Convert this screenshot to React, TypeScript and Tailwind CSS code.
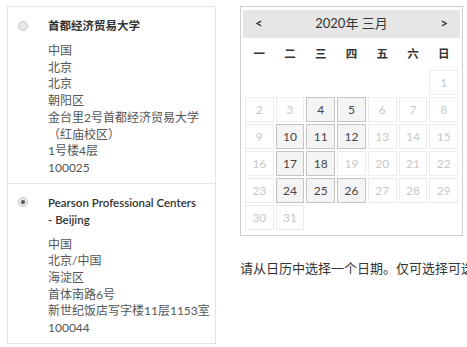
import React from "react";

const FONT = { fontFamily: '"Lato", "Noto Sans CJK SC", sans-serif' };

function Radio({ checked }: { checked?: boolean }) {
  return (
    <div className="w-[10px] h-[10px] shrink-0 rounded-full border border-[#c8c8c8] bg-[#e8e8e8] flex items-center justify-center mt-[3.5px]">
      {checked && <div className="w-[4px] h-[4px] rounded-full bg-[#555]" />}
    </div>
  );
}

function Item({ title, lines, checked, last }: { title: string[]; lines: string[]; checked?: boolean; last?: boolean }) {
  return (
    <div className={"flex gap-[20px] pl-[10px] pt-[10px] " + (last ? "pb-[6px]" : "pb-[6px] border-b border-[#e6e6e6]")}>
      <Radio checked={checked} />
      <div className="w-[166px] shrink-0">
        <div className="text-[11.5px] leading-[17px] font-semibold text-[#333]">
          {title.map((t, i) => (
            <div key={i}>{t}</div>
          ))}
        </div>
        <div className="mt-[9px] text-[12px] leading-[16.7px] text-[#555] whitespace-nowrap">
          {lines.map((t, i) => (
            <div key={i}>{t}</div>
          ))}
        </div>
      </div>
    </div>
  );
}

const enabled = new Set([4, 5, 10, 11, 12, 17, 18, 24, 25, 26]);

export default function App() {
  const cells: (number | null)[] = [null, null, null, null, null, null];
  for (let d = 1; d <= 31; d++) cells.push(d);
  return (
    <div className="w-[467px] h-[347px] overflow-hidden bg-white relative" style={FONT}>
      <div className="flex items-start pt-[6px] pl-[7px]">
        <div className="w-[209px] shrink-0 border border-[#e3e3e3]">
          <Item
            title={["首都经济贸易大学"]}
            lines={["中国", "北京", "北京", "朝阳区", "金台里2号首都经济贸易大学", "（红庙校区）", "1号楼4层", "100025"]}
          />
          <Item
            checked
            last
            title={["Pearson Professional Centers", "- Beijing"]}
            lines={["中国", "北京/中国", "海淀区", "首体南路6号", "新世纪饭店写字楼11层1153室", "100044"]}
          />
        </div>
        <div className="ml-[24px] w-[223px] shrink-0 flex flex-col">
          <div className="w-[223px] border border-[#cfcfcf] p-[2px] pb-[5px]">
            <div className="h-[28px] bg-[#e6e6e6] flex items-center justify-between px-[12px] text-[#333] mt-[1px]">
              <span className="font-bold text-[13px]">&lt;</span>
              <span className="text-[13px]">2020年 三月</span>
              <span className="font-bold text-[13px]">&gt;</span>
            </div>
            <div className="mx-[2px] grid grid-cols-7 gap-x-[2px] h-[32px] items-center text-[11.5px] font-bold text-[#333]">
              {["一", "二", "三", "四", "五", "六", "日"].map((w) => (
                <div key={w} className="text-center">{w}</div>
              ))}
            </div>
            <div className="mx-[2px] grid grid-cols-7 gap-[2px]">
              {cells.map((d, i) =>
                d === null ? (
                  <div key={i} className="h-[25px]" />
                ) : enabled.has(d) ? (
                  <div key={i} className="h-[25px] flex items-center justify-center border border-[#c4c4c4] bg-[#f4f4f4] text-[12px] text-[#444]">
                    {d}
                  </div>
                ) : (
                  <div key={i} className="h-[25px] flex items-center justify-center border border-[#ececec] bg-white text-[12px] text-[#c8c8c8]">
                    {d}
                  </div>
                )
              )}
            </div>
          </div>
          <div
            className="mt-[23px] whitespace-nowrap text-[13px] leading-[18px] text-[#333]"
            style={{ fontFamily: '"Noto Sans CJK SC", sans-serif' }}
          >
            请从日历中选择一个日期。仅可选择可选日期。
          </div>
        </div>
      </div>
    </div>
  );
}
